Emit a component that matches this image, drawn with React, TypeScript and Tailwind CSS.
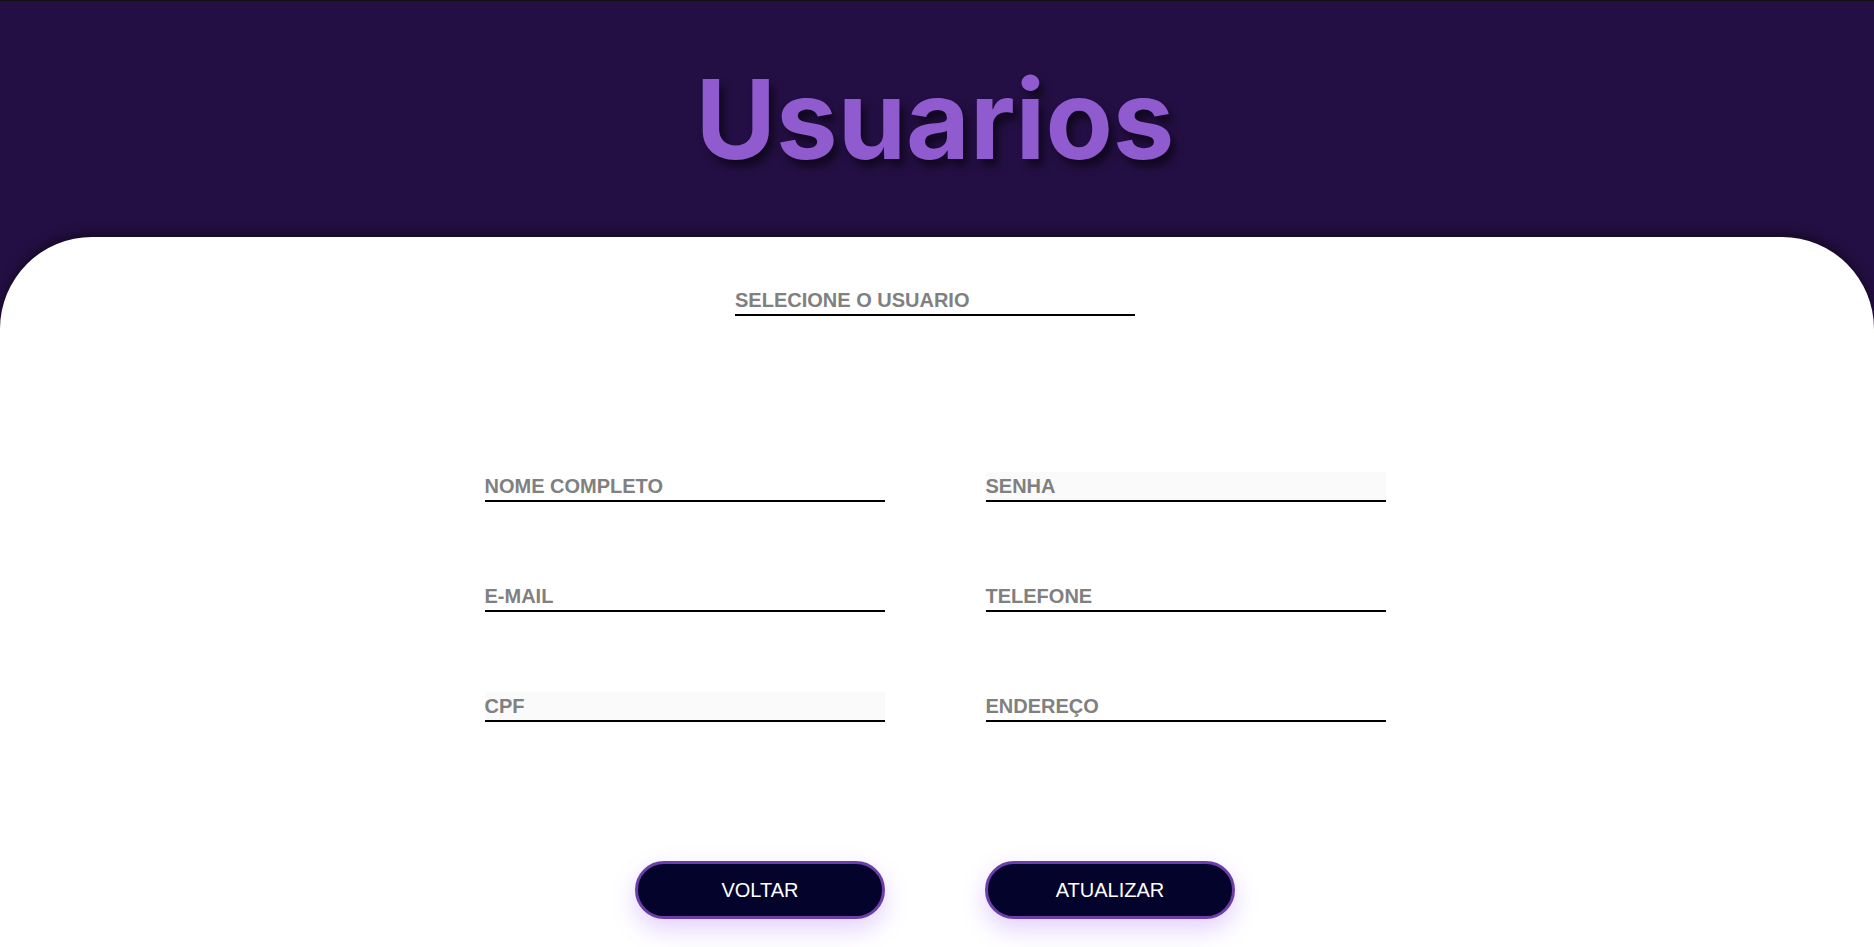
import React from 'react';

const fields = [
  { label: 'NOME COMPLETO', filled: false },
  { label: 'SENHA', filled: true },
  { label: 'E-MAIL', filled: false },
  { label: 'TELEFONE', filled: false },
  { label: 'CPF', filled: true },
  { label: 'ENDEREÇO', filled: false },
];

function Field({ label, filled }: { label: string; filled?: boolean }) {
  return (
    <div
      className={`w-[400px] h-[30px] flex items-center border-b-2 border-black text-[20px] font-bold text-[#808080] ${
        filled ? 'bg-[#fafafa]' : 'bg-white'
      }`}
    >
      {label}
    </div>
  );
}

export default function App() {
  return (
    <div
      className="min-h-screen flex flex-col bg-[#240f44] border-t border-[#111111]"
      style={{ fontFamily: '"Liberation Sans", Arial, sans-serif' }}
    >
      {/* Header */}
      <header className="h-[236px] flex justify-center pt-[63px] pr-[4px]">
        <h1
          className="text-[110px] leading-none font-bold text-[#905bcf] [text-shadow:5px_7px_8px_rgba(0,0,0,0.55)]"
          style={{ fontFamily: 'Inter, sans-serif' }}
        >
          Usuarios
        </h1>
      </header>

      {/* Card */}
      <main className="flex-1 bg-white rounded-t-[92px] shadow-[0_-4px_12px_rgba(0,0,0,0.45)] flex flex-col items-center pt-[49px] pb-[40px] pr-[4px]">
        <Field label="SELECIONE O USUARIO" />

        <div className="grid grid-cols-2 gap-x-[101px] gap-y-[80px] mt-[156px]">
          {fields.map((f) => (
            <Field key={f.label} label={f.label} filled={f.filled} />
          ))}
        </div>

        <div className="flex gap-[100px] mt-[139px]">
          <button className="w-[250px] h-[58px] rounded-full border-[3px] border-[#6b3ea8] bg-[#03032b] text-white text-[20px] shadow-[0_10px_24px_rgba(160,100,255,0.3)]">
            VOLTAR
          </button>
          <button className="w-[250px] h-[58px] rounded-full border-[3px] border-[#6b3ea8] bg-[#03032b] text-white text-[20px] shadow-[0_10px_24px_rgba(160,100,255,0.3)]">
            ATUALIZAR
          </button>
        </div>
      </main>
    </div>
  );
}
